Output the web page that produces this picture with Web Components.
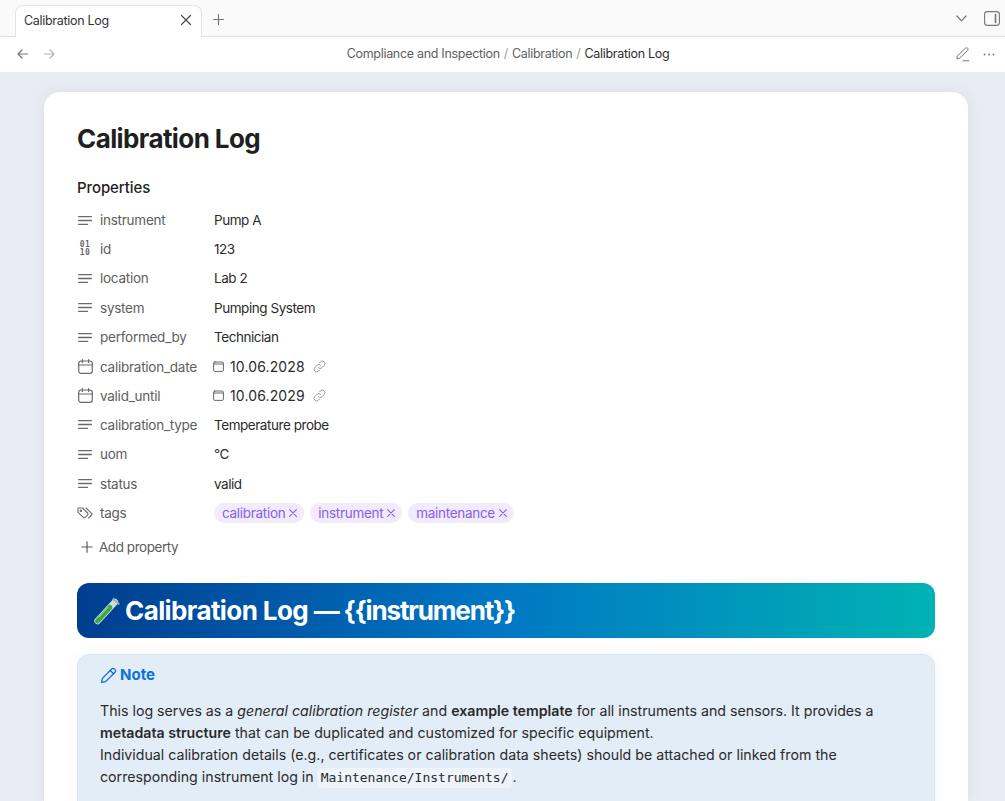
<!DOCTYPE html>
<html><head><meta charset="utf-8">
<style>
html,body{margin:0;height:100%;overflow:hidden;background:#e9edf3;font-family:Inter,"Liberation Sans",sans-serif;}
body{display:flex;flex-direction:column;height:801px}
</style></head><body>
<app-tabbar></app-tabbar>
<app-navbar></app-navbar>
<note-page>
  <h-title>Calibration Log</h-title>
  <prop-list>
    <prop-row icon="text" name="instrument" h="30">Pump A</prop-row>
    <prop-row icon="num" name="id" h="28">123</prop-row>
    <prop-row icon="text" name="location" h="30">Lab 2</prop-row>
    <prop-row icon="text" name="system" h="29">Pumping System</prop-row>
    <prop-row icon="text" name="performed_by" h="30">Technician</prop-row>
    <prop-row icon="date" name="calibration_date" h="29"><date-val>10.06.2028</date-val></prop-row>
    <prop-row icon="date" name="valid_until" h="29"><date-val>10.06.2029</date-val></prop-row>
    <prop-row icon="text" name="calibration_type" h="29">Temperature probe</prop-row>
    <prop-row icon="text" name="uom" h="30">°C</prop-row>
    <prop-row icon="text" name="status" h="29">valid</prop-row>
    <prop-row icon="tags" name="tags" h="30"><tag-pill>calibration</tag-pill><tag-pill>instrument</tag-pill><tag-pill>maintenance</tag-pill></prop-row>
  </prop-list>
  <banner-head>Calibration Log <span style="letter-spacing:-1.15px">— {{instrument}}</span></banner-head>
  <note-callout title="Note">This log serves as a <em>general calibration register</em> and <strong>example template</strong> for all instruments and sensors. It provides a <strong>metadata structure</strong> that can be duplicated and customized for specific equipment.<br>Individual calibration details (e.g., certificates or calibration data sheets) should be attached or linked from the corresponding instrument log in <code>Maintenance/Instruments/</code>.</note-callout>
</note-page>
<script>
const def=(n,html,init)=>customElements.define(n,class extends HTMLElement{
  connectedCallback(){ if(this.shadowRoot)return; const s=this.attachShadow({mode:'open'}); s.innerHTML=typeof html==='function'?html(this):html; init&&init(this,s);} });
const svg=(w,h,vb,body,extra='')=>`<svg width="${w}" height="${h}" viewBox="${vb}" fill="none" stroke="currentColor" stroke-linecap="round" stroke-linejoin="round" ${extra}>${body}</svg>`;

def('app-tabbar',`<style>
:host{display:flex;flex:none;height:37px;box-sizing:border-box;background:#fafafa;border-bottom:1px solid #e2e2e2;align-items:flex-end;padding-left:15px;color:#2b2b2b}
.tab{box-sizing:border-box;width:187px;height:32px;margin-bottom:-1px;background:#fff;border:1px solid #e4e4e4;border-bottom:0;border-radius:8px 8px 0 0;display:flex;align-items:center;padding:0 9px 3px 8px;font-size:12.5px;letter-spacing:-.3px;justify-content:space-between;color:#333}
.plus{color:#777;margin-left:10px;align-self:flex-start;margin-top:13px;display:flex}
.x{display:flex;color:#4a4a4a}
.sp{flex:1}
.r{display:flex;align-items:center;align-self:flex-start;margin-top:11px;gap:17px;padding-right:5px;color:#777}
</style><div class="tab"><span>Calibration Log</span><span class="x">${svg(12,12,'0 0 12 12','<path d="M1.5 1.5l9 9M10.5 1.5l-9 9"/>','stroke-width="1.2"')}</span></div>
<span class="plus">${svg(13,13,'0 0 13 13','<path d="M6.5 1.5v10M1.5 6.5h10"/>','stroke-width="1.2"')}</span><span class="sp"></span>
<span class="r">${svg(11,7,'0 0 11 7','<path d="M1 1l4.5 4.8L10 1"/>','stroke-width="1.2"')}${svg(16,15,'0 0 16 15','<rect x=".6" y=".6" width="14.8" height="13.8" rx="2.8"/><path d="M11.5 3.5v8" stroke-width="1.6"/>','stroke-width="1.1"')}</span>`);

def('app-navbar',`<style>
:host{display:flex;flex:none;height:35px;background:#fff;align-items:center;position:relative;padding:0 10px 3px 17px;box-sizing:border-box;color:#777;font-size:12.5px;letter-spacing:-.3px;justify-content:space-between}
.l,.r{display:flex;align-items:center}
.l{gap:16px}.r{gap:13px;padding-top:2px}
.l{padding-top:2px}
.c{flex:1;text-align:center;color:#5e5e5e;padding-left:5px;white-space:pre}
.c b{font-weight:400;color:#2e2e2e}.c i{font-style:normal;color:#999;padding:0 4px}
.off{color:#b5b5b5}
</style><div class="l">${svg(11,10,'0 0 11 10','<path d="M10.5 5H1M5 1L1 5l4 4"/>','stroke-width="1.2"')}<span class="off" style="display:flex">${svg(11,10,'0 0 11 10','<path d="M.5 5H10M6 1l4 4-4 4"/>','stroke-width="1.2"')}</span></div>
<div class="c">Compliance and Inspection<i>/</i>Calibration<i>/</i><b>Calibration Log</b></div>
<div class="r">${svg(14,15,'0 0 14 15','<path d="M1 11.5L1.2 9 9.5 1.2c.7-.6 1.6-.5 2.2.1s.6 1.5 0 2.1L3.5 11.2zM7 13.8h6"/>','stroke-width="1"')}${svg(12,3,'0 0 12 3','<circle cx="1.5" cy="1.5" r=".9" fill="currentColor" stroke="none"/><circle cx="6" cy="1.5" r=".9" fill="currentColor" stroke="none"/><circle cx="10.5" cy="1.5" r=".9" fill="currentColor" stroke="none"/>')}</div>`);

def('note-page',`<style>
:host{display:block;flex:1;min-height:0;overflow:hidden;padding:20px 37px 0 44px;background:#e9edf3}
.card{background:#fff;border-radius:16px 16px 0 0;padding:27px 33px 0 33px;height:100%;box-sizing:border-box;box-shadow:0 0 16px rgba(160,170,190,.22)}
</style><div class="card"><slot></slot></div>`);

def('h-title',`<style>:host{display:block;font-size:26px;font-weight:700;line-height:40px;color:#1f1f1f;letter-spacing:-.6px}</style><slot></slot>`);

def('prop-list',`<style>:host{display:block;margin-top:19px}
h3{margin:0;font-size:15px;font-weight:500;line-height:20px;color:#222;letter-spacing:-.1px;margin-bottom:7px}
.add{display:flex;align-items:center;height:20px;margin-top:9px;padding-left:4px;gap:6px;font-size:13.5px;letter-spacing:-.45px;color:#5c5c5c}
</style><h3>Properties</h3><slot></slot><div class="add">${svg(12,12,'0 0 12 12','<path d="M6 .8v10.4M.8 6h10.4"/>','stroke-width="1.2"')}<span>Add property</span></div>`);

const icons={
 text:svg(14,9,'0 0 14 9','<path d="M.6 .7h12.8M.6 4.5h12.8M.6 8.3h9"/>','stroke-width="1.3"'),
 num:`<span style="font:600 8px/8px 'DejaVu Sans Mono','Liberation Mono',monospace;letter-spacing:.5px;display:block;text-align:center;width:16px">01<br>10</span>`,
 date:svg(15,15,'0 0 15 15','<rect x=".7" y="2" width="13.6" height="12.4" rx="2.4"/><path d="M.7 6h13.6M4.4.6v2.8M10.6.6v2.8"/>','stroke-width="1.2"'),
 tags:svg(16,13,'0 0 16 13','<path d="M1 1h4.6l5 5a1.3 1.3 0 010 1.8L8.2 10.4a1.3 1.3 0 01-1.8 0L1 5.4z"/><circle cx="3.8" cy="3.8" r=".7"/><path d="M9 1l5.6 5.3a1.2 1.2 0 010 1.7l-3 3"/>','stroke-width="1.1"')
};
def('prop-row',h=>`<style>
:host{display:flex;align-items:center;height:${h.getAttribute('h')}px;font-size:13.5px;letter-spacing:-.45px;color:#2b2b2b}
.ic{width:16px;display:flex;justify-content:center;color:#6a6a6a;flex:none;margin-right:7px}
.n{width:114px;flex:none;color:#5e5e5e;letter-spacing:-.25px}
.v{display:flex;align-items:center;gap:6px}
</style><span class="ic">${icons[h.getAttribute('icon')]}</span><span class="n">${h.getAttribute('name')}</span><div class="v"><slot></slot></div>`);

def('date-val',`<style>:host{display:flex;align-items:center;color:#2b2b2b;font-size:14px;letter-spacing:.12px}
.c{display:flex;color:#666;margin-right:6px;margin-left:-1px}.k{display:flex;color:#999;margin-left:8px}
</style><span class="c">${svg(11,11,'0 0 11 11','<rect x=".6" y="1" width="9.8" height="9.4" rx="1.2"/><path d="M.6 3h9.8"/>','stroke-width="1"')}</span><slot></slot><span class="k">${svg(13,13,'0 0 13 13','<path d="M5.3 7.7a2.6 2.6 0 003.7 0l2.2-2.2a2.6 2.6 0 00-3.7-3.7l-.8.8M7.7 5.3a2.6 2.6 0 00-3.7 0L1.8 7.5a2.6 2.6 0 003.7 3.7l.8-.8"/>','stroke-width="1"')}</span>`);

def('tag-pill',`<style>:host{display:inline-flex;align-items:center;height:20px;border-radius:10px;background:#f0ecfb;color:#8a5cf0;font-size:13.5px;letter-spacing:-.3px;padding:0 7px 0 8px;gap:4px}
span{display:flex}</style><slot></slot><span>${svg(8,8,'0 0 8 8','<path d="M.6 .6l6.8 6.8M7.4 .6L.6 7.4"/>','stroke-width="1.1"')}</span>`);

def('banner-head',`<style>:host{display:flex;align-items:center;height:55px;margin-top:26px;border-radius:12px;background:linear-gradient(90deg,#003d8f 0%,#0078c4 50%,#00b3b3 100%);color:#fff;font-size:26px;font-weight:700;padding-left:17px;gap:5px;letter-spacing:-.6px;white-space:pre}
svg{flex:none}</style>
<svg width="26" height="28" viewBox="0 0 26 28"><path d="M3.5 24L21 5" stroke="#c9ded8" stroke-width="6.4" stroke-linecap="round"/><path d="M3.5 24L16 10.4" stroke="#39a845" stroke-width="4.8" stroke-linecap="round"/><path d="M5 20L14 10.4" stroke="#7fd07f" stroke-width="1.2" stroke-linecap="round"/><path d="M19.5 2.2L24.5 6.8" stroke="#9fb3b5" stroke-width="2.2" stroke-linecap="round"/></svg><div><slot></slot></div>`);

def('note-callout',h=>`<style>:host{display:block;margin-top:16px;box-sizing:border-box;background:#e3edf8;border:1px solid #dae6f3;border-radius:12px 12px 0 0;padding:9px 22px 20px 22px;color:#2a2a2a;font-size:14.2px;line-height:22px;box-shadow:0 0 14px rgba(170,180,200,.12)}
.t{display:flex;align-items:center;gap:3px;height:22px;margin-bottom:14px;color:#0a72d8;font-weight:700;font-size:15px}
</style><div class="t">${svg(17,17,'0 0 17 17','<path d="M1.6 15.4l.8-4L11.7 2a2 2 0 012.9 0l.4.4a2 2 0 010 2.9L5.6 14.6z"/><path d="M10.3 3.5l3.2 3.2"/>','stroke-width="1.3"')}<span>${h.getAttribute('title')}</span></div><div class="b"><slot></slot></div>`);
</script>
<style>
note-callout code{display:inline-block;line-height:18px;font-family:"DejaVu Sans Mono","Liberation Mono",monospace;font-size:13px;background:#eef4fb;border-radius:4px;padding:1px 3px;margin-right:1px;color:#2a2a2a}
note-callout strong{font-weight:600}
</style>
</body></html>
